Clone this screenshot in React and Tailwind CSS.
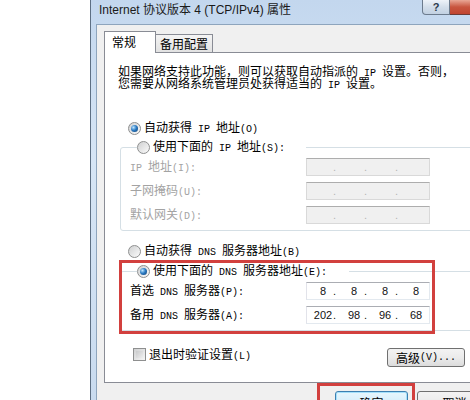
const cjk = "font-['Noto_Sans_CJK_SC',sans-serif]";

const M = ({ children }) => (
  <span className="font-['Liberation_Mono',monospace] text-[10px]">{children}</span>
);

const Radio = ({ on }) => (
  <span className="w-[13px] h-[13px] shrink-0 rounded-full border border-[#8e8f8f] bg-[linear-gradient(135deg,#cfd0d1,#fbfbfb)] flex items-center justify-center">
    {on && (
      <span className="w-[7px] h-[7px] rounded-full bg-[radial-gradient(circle_at_35%_35%,#bfe6ff,#2c7cc4_45%,#0b3a6e)]" />
    )}
  </span>
);

const IpBox = ({ parts, disabled }) => (
  <div
    className={`w-[124px] h-[18px] border flex items-center pl-[6px] font-['Liberation_Sans',sans-serif] text-[11px] ${
      disabled
        ? 'bg-[#f0f0f0] border-[#d9d9d9] border-t-[#adadad]'
        : 'bg-white border-[#e3e9ef] border-t-[#abadb3] border-l-[#e2e3ea] text-[#111]'
    }`}
  >
    {[0, 1, 2, 3].map(i => (
      <div key={i} className="flex items-center">
        <span className="w-[20px] text-center leading-[14px]">{parts ? parts[i] : ''}</span>
        {i < 3 && (
          <span className={`w-[11px] leading-[14px] ${disabled ? 'text-[#b5b5b5]' : ''}`}>.</span>
        )}
      </div>
    ))}
  </div>
);

const Row = ({ label, children, disabled }) => (
  <div className="flex items-center h-[18px]">
    <span className={`w-[176px] leading-[16px] whitespace-nowrap ${disabled ? 'text-[#a3a3a3]' : 'text-black'}`}>
      {label}
    </span>
    {children}
  </div>
);

export default function App() {
  return (
    <div className={`w-[470px] h-[400px] bg-white overflow-hidden flex text-[12px] ${cjk}`}>
      <div className="w-[90px] shrink-0 bg-white" />

      {/* window */}
      <div className="w-[410px] shrink-0 flex flex-col border-l border-[#5d6f83] bg-[linear-gradient(180deg,#c3d7ee,#d6e5f5_40%,#c9dbef)]">
        {/* title bar */}
        <div className="h-[24px] shrink-0 flex items-start">
          <span className="ml-[8px] mt-[3px] text-[12px] leading-[15px] text-[#1a1a1a] font-['Liberation_Sans','Noto_Sans_CJK_SC',sans-serif] whitespace-nowrap">
            Internet 协议版本 4 (TCP/IPv4) 属性
          </span>
          <div className="ml-auto mr-[7px] flex">
            <div className="w-[28px] h-[15px] border border-t-0 border-[#6c7b8d] rounded-bl-[4px] bg-[linear-gradient(180deg,#eef3f9,#d3deea_50%,#c2d1e2)] flex items-center justify-center">
              <span className="font-['Liberation_Sans',sans-serif] text-[11px] leading-[12px] text-[#2b3a4c] font-bold">?</span>
            </div>
            <div className="w-[43px] h-[15px] border border-t-0 border-l-0 border-[#6c3b35] rounded-br-[4px] bg-[linear-gradient(180deg,#e9a796,#c8553f_50%,#c04530)]" />
          </div>
        </div>

        {/* client */}
        <div className="flex-1 ml-[5px] border-l border-t border-[#8ea5bd] bg-[#f0f0f0] pl-[7px] pt-[6px]">
          {/* tabs */}
          <div className="flex items-end h-[22px] relative z-10">
            <div className="w-[52px] h-[22px] bg-white border border-b-0 border-[#898c95] pl-[7px] pt-[2px] leading-[16px] text-black">
              常规
            </div>
            <div className="w-[57px] h-[18px] mb-[1px] border border-l-0 border-b-0 border-[#898c95] bg-[linear-gradient(180deg,#f4f4f4,#e2e2e2)] text-center leading-[17px] text-black">
              备用配置
            </div>
          </div>

          {/* panel */}
          <div className="-mt-[1px] w-[400px] h-[331px] border border-[#898c95] bg-white text-black">
            <div className="pl-[13px] pt-[12px] whitespace-nowrap">
              <div className="h-[12px] leading-[12px]">
                如果网络支持此功能，则可以获取自动指派的<M> IP </M>设置。否则，
              </div>
              <div className="h-[12px] leading-[12px]">
                您需要从网络系统管理员处获得适当的<M> IP </M>设置。
              </div>
            </div>

            <div className="mt-[31px] ml-[23px] h-[16px] flex items-center gap-[3px] leading-[16px]">
              <Radio on />
              <span>
                自动获得<M> IP </M>地址<M>(O)</M>
              </span>
            </div>

            <fieldset className="mt-[3px] ml-[15px] w-[370px] border border-[#d5dfe5] rounded-[3px] pl-[9px] pb-[6px]">
              <legend className="ml-[7px] w-[169px] h-[16px] p-0 flex items-center gap-[3px] leading-[16px]">
                <Radio />
                <span className="whitespace-nowrap">
                  使用下面的<M> IP </M>地址<M>(S):</M>
                </span>
              </legend>
              <div className="mt-[3px] flex flex-col gap-[6px]">
                <Row disabled label={<><M>IP </M>地址<M>(I):</M></>}>
                  <IpBox disabled />
                </Row>
                <Row disabled label={<>子网掩码<M>(U):</M></>}>
                  <IpBox disabled />
                </Row>
                <Row disabled label={<>默认网关<M>(D):</M></>}>
                  <IpBox disabled />
                </Row>
              </div>
            </fieldset>

            <div className="mt-[12px] ml-[23px] h-[16px] flex items-center gap-[3px] leading-[16px]">
              <Radio />
              <span>
                自动获得<M> DNS </M>服务器地址<M>(B)</M>
              </span>
            </div>

            <div className="relative mt-[4px] ml-[15px] w-[370px]">
              <fieldset className="border border-[#d5dfe5] rounded-[3px] pl-[9px] pb-[6px]">
                <legend className="ml-[7px] w-[212px] h-[16px] p-0 flex items-center gap-[3px] leading-[16px]">
                  <Radio on />
                  <span className="whitespace-nowrap">
                    使用下面的<M> DNS </M>服务器地址<M>(E):</M>
                  </span>
                </legend>
                <div className="mt-[3px] flex flex-col gap-[6px]">
                  <Row label={<>首选<M> DNS </M>服务器<M>(P):</M></>}>
                    <IpBox parts={['8', '8', '8', '8']} />
                  </Row>
                  <Row label={<>备用<M> DNS </M>服务器<M>(A):</M></>}>
                    <IpBox parts={['202', '98', '96', '68']} />
                  </Row>
                </div>
              </fieldset>
              <div className="absolute -left-[1px] -top-[3px] w-[316px] h-[74px] border-[3px] border-[#d2403e]" />
            </div>

            <div className="mt-[17px] ml-[28px] w-[332px] flex items-start justify-between">
              <div className="flex items-center gap-[3px] h-[13px]">
                <span className="w-[13px] h-[13px] border border-[#8e8f8f] bg-[linear-gradient(135deg,#cfd0d1,#f6f6f6)] p-[2px]">
                  <span className="block w-full h-full bg-[linear-gradient(135deg,#c9cacb,#eeeeee)]" />
                </span>
                <span className="leading-[13px]">
                  退出时验证设置<M>(L)</M>
                </span>
              </div>
              <div className="w-[78px] h-[19px] rounded-[3px] border border-[#707070] bg-[linear-gradient(180deg,#f3f3f3,#ebebeb_50%,#dcdcdc)] flex items-center justify-center leading-[16px]">
                高级<M>(V)...</M>
              </div>
            </div>
          </div>

          {/* dialog buttons */}
          <div className="relative mt-[8px] ml-[231px] flex gap-[9px]">
            <div className="w-[73px] h-[23px] rounded-[3px] border border-[#3c7fb1] bg-[linear-gradient(180deg,#e8f6fd,#d6eefb_50%,#bee4f8)] shadow-[inset_0_0_0_1px_#a5e0fb] flex items-start justify-center pt-[3px] leading-[16px] text-black">
              确定
            </div>
            <div className="w-[75px] h-[23px] rounded-[3px] border border-[#707070] bg-[linear-gradient(180deg,#f3f3f3,#ebebeb_50%,#dcdcdc)] flex items-start justify-center pt-[3px] leading-[16px] text-black">
              取消
            </div>
            <div className="absolute -left-[18px] -top-[8px] w-[98px] h-[30px] border-[3px] border-[#d2403e]" />
          </div>
        </div>
      </div>
    </div>
  );
}
